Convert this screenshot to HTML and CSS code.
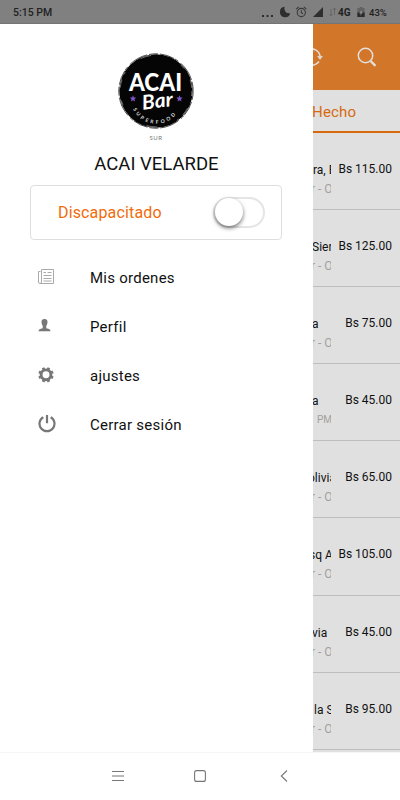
FILE: index.html
```html
<!DOCTYPE html>
<html lang="es">
<head>
    <meta charset="UTF-8">
    <meta name="viewport" content="width=device-width, initial-scale=1.0">
    <title>ACAI VELARDE</title>
    <link rel="stylesheet" href="styles.css">
</head>
<body>
    <div class="phone">
        <header class="status-bar">
            <span class="status-time">5:15 PM</span>
            <svg class="status-icons" width="75" height="24" viewBox="0 0 75 24">
                <g fill="#2e2e2e">
                    <rect x="0" y="15" width="2" height="2"/>
                    <rect x="4.5" y="15" width="2" height="2"/>
                    <rect x="9" y="15" width="2" height="2"/>
                    <path d="M22.6 6.8A5.2 5.2 0 1 0 28.2 13.2A4.8 4.8 0 0 1 22.6 6.8Z"/>
                    <path d="M61 7V17H51Z"/>
                </g>
                <g fill="none" stroke="#393939" stroke-width="1.1">
                    <circle cx="39.3" cy="12.5" r="4.1"/>
                    <path d="M39.3 10.2V12.7L41 13.7M34.2 9.2L36.8 6.9M41.8 6.9L44.4 9.2"/>
                </g>
                <path fill="none" stroke="#616161" stroke-width=".8" d="M69 9V16M67.5 14.2L69 16L70.5 14.2M72.5 15V8M71.3 9.7L72.5 8L73.7 9.7"/>
            </svg>
            <span class="network">4G</span>
            <svg class="battery" width="8" height="10" viewBox="0 0 8 11">
                <path fill="#626262" d="M2.5 0H5.5V1H8V11H0V1H2.5Z"/>
                <path fill="#2c2c2c" d="M0 6H8V11H0Z"/>
                <path fill="#929292" d="M4.7 3L2 7H3.7L3.3 9.5L6 5.7H4.4Z"/>
            </svg>
            <span class="percent">43%</span>
        </header>

        <div class="screen">
            <aside class="drawer">
                <svg class="logo" width="78" height="96" viewBox="0 0 78 96">
                    <circle cx="39" cy="39" r="36.7" fill="#050505"/>
                    <circle cx="39" cy="39" r="37.2" fill="none" stroke="#222" stroke-width=".8" stroke-dasharray="9 2 15 1 4 3 20 2"/>
                    <circle cx="39" cy="39" r="35.9" fill="none" stroke="#bbb" stroke-width=".6" stroke-dasharray="5 13 8 6 2 21 11 32"/>
                    <text class="logo-acai" x="12" y="39" textLength="53" lengthAdjust="spacingAndGlyphs">ACAI</text>
                    <text class="logo-bar" x="25" y="56" textLength="31" lengthAdjust="spacingAndGlyphs" transform="rotate(-7 39 50)">Bar</text>
                    <path id="ring" d="M16 57A25.5 25.5 0 0 0 64 52" fill="none"/>
                    <text class="logo-food"><textPath href="#ring" textLength="51">SUPERFOOD</textPath></text>
                    <path fill="#7d55c7" d="M16 43.2L16.9 45.4L19.2 45.6L17.5 47.2L18 49.5L16 48.3L14 49.5L14.5 47.2L12.8 45.6L15.1 45.4ZM62.5 43.2L63.4 45.4L65.7 45.6L64 47.2L64.5 49.5L62.5 48.3L60.5 49.5L61 47.2L59.3 45.6L61.6 45.4Z"/>
                    <text class="logo-sur" x="32.5" y="87.5" textLength="12.5">SUR</text>
                </svg>
                <h1 class="store-name">ACAI VELARDE</h1>

                <div class="toggle-card">
                    <span class="toggle-label">Discapacitado</span>
                    <span class="switch"><span class="knob"></span></span>
                </div>

                <nav class="menu">
                    <a class="menu-item">
                        <svg width="18" height="20" viewBox="0 0 18 20">
                            <path fill="none" stroke="#aaa" d="M3.5 2.5H15.5V16.5H2Q.5 16.5.5 15V4.5H2.5M3.5 2.5V15Q3.5 16.5 2 16.5M5.5 5.5H8M9.5 5.5H13.5M5.5 8.5H13.5M5.5 11.5H13.5M5.5 14H13.5"/>
                        </svg>
                        <span>Mis ordenes</span>
                    </a>
                    <a class="menu-item">
                        <svg width="18" height="20" viewBox="0 0 18 20">
                            <path fill="#777" d="M6.5 3C8.9 3 9.7 4.5 9.5 6.5Q9.2 8.7 8.3 9.7V12.2Q12.5 12.8 12.5 15.2H.5Q.5 12.8 4.7 12.2V9.7Q3.8 8.7 3.5 6.5C3.3 4.5 4.1 3 6.5 3Z"/>
                        </svg>
                        <span>Perfil</span>
                    </a>
                    <a class="menu-item">
                        <svg width="18" height="20" viewBox="0 0 18 20">
                            <circle cx="8" cy="9.8" r="4.9" fill="none" stroke="#777" stroke-width="2.9"/>
                            <path stroke="#777" stroke-width="2.8" d="M6 4.8L5.1 2.7M10 4.8L10.9 2.7M13 7.8L15.1 6.9M13 11.8L15.1 12.7M10 14.8L10.9 16.9M6 14.8L5.1 16.9M3 11.8L.9 12.7M3 7.8L.9 6.9"/>
                        </svg>
                        <span>ajustes</span>
                    </a>
                    <a class="menu-item">
                        <svg width="18" height="20" viewBox="0 0 18 20">
                            <path fill="none" stroke="#777" stroke-width="2.2" d="M5.3 3.2A7.5 7.5 0 1 0 12.7 3.2M9 1V9.3"/>
                        </svg>
                        <span>Cerrar sesión</span>
                    </a>
                </nav>
            </aside>

            <main class="orders">
                <div class="toolbar">
                    <svg width="87" height="66" viewBox="0 0 87 66">
                        <g fill="none" stroke="#e2dfdc">
                            <path stroke-width="1.5" d="M-5 26A8.3 8.3 0 0 1 7 32M6 37.5A8.3 8.3 0 0 1-5 40"/>
                            <path fill="#e2dfdc" stroke-width=".5" d="M4.5 32.3H9.5L7 35.5Z"/>
                            <circle cx="52.5" cy="31.5" r="7.2" stroke-width="1.5"/>
                            <path stroke-width="2.2" d="M57.7 37.1L62.5 41.9"/>
                        </g>
                    </svg>
                </div>
                <div class="tab">Hecho</div>
                <ul class="order-list">
                    <li class="order">
                        <div class="info"><p class="name">ra, B</p><p class="time cut-r">r - O</p></div>
                        <span class="price">Bs 115.00</span>
                    </li>
                    <li class="order">
                        <div class="info"><p class="name cut-s">Sier</p><p class="time cut-r">r - O</p></div>
                        <span class="price">Bs 125.00</span>
                    </li>
                    <li class="order">
                        <div class="info"><p class="name cut-s">a</p><p class="time cut-r">r - O</p></div>
                        <span class="price">Bs 75.00</span>
                    </li>
                    <li class="order">
                        <div class="info"><p class="name cut-s">a</p><p class="time pm">PM</p></div>
                        <span class="price">Bs 45.00</span>
                    </li>
                    <li class="order">
                        <div class="info"><p class="name cut-o">olivia</p><p class="time cut-r">r - O</p></div>
                        <span class="price">Bs 65.00</span>
                    </li>
                    <li class="order">
                        <div class="info"><p class="name cut-q">sq A</p><p class="time cut-r">r - O</p></div>
                        <span class="price">Bs 105.00</span>
                    </li>
                    <li class="order">
                        <div class="info"><p class="name cut-s">via</p><p class="time cut-r">r - O</p></div>
                        <span class="price">Bs 45.00</span>
                    </li>
                    <li class="order">
                        <div class="info"><p class="name la">la S</p><p class="time cut-r">r - O</p></div>
                        <span class="price">Bs 95.00</span>
                    </li>
                </ul>
            </main>
        </div>

        <footer class="nav-bar">
            <svg width="12" height="12" viewBox="0 0 12 12"><path stroke="#777" d="M0 1.5H12M0 6H12M0 10.5H12"/></svg>
            <svg width="12" height="12" viewBox="0 0 12 12"><rect x=".6" y=".6" width="10.8" height="10.8" rx="2" fill="none" stroke="#777" stroke-width="1.1"/></svg>
            <svg width="12" height="12" viewBox="0 0 12 12"><path fill="none" stroke="#777" stroke-width="1.1" d="M11 .5L5.3 6L11 11.5"/></svg>
        </footer>
    </div>
</body>
</html>
```

FILE: styles.css
```css
:root {
    --orange: #d27629;
    --bright-orange: #ef6c0b;
    --dimmed: #e0e0e0;
}

* {
    box-sizing: border-box;
}

body {
    margin: 0;
    font-family: Roboto, sans-serif;
    color: #111;
    background: #fff;
}

.phone {
    width: 400px;
    height: 800px;
    display: flex;
    flex-direction: column;
    overflow: hidden;
}

.status-bar {
    height: 24px;
    flex: none;
    display: flex;
    align-items: center;
    padding: 1px 12px 0 13px;
    background: #808080;
    border-bottom: 1px solid #747474;
    color: #222;
    font-size: 10.5px;
    font-weight: 500;
}

.status-icons {
    margin-left: auto;
}

.network {
    width: 13px;
    margin-left: 1px;
    font-size: 10px;
    font-weight: 700;
}

.battery {
    margin: 0 4px 0 6px;
}

.percent {
    width: 19px;
    font-size: 9.5px;
}

.screen {
    height: 728px;
    flex: none;
    display: flex;
}

/* Drawer */
.drawer {
    width: 313px;
    flex: none;
    display: flex;
    flex-direction: column;
    background: #fff;
}

.logo {
    margin: 28px 0 0 117px;
}

.logo-acai {
    font: 900 24px Lato, sans-serif;
    fill: #fff;
}

.logo-bar {
    font: italic 700 20px Lato, sans-serif;
    fill: #fff;
}

.logo-food {
    font: 700 5px Lato, sans-serif;
    fill: #ddd;
}

.logo-sur {
    font: 6px Lato, sans-serif;
    fill: #777;
}

.store-name {
    margin: 5px 0 0;
    font-size: 18.5px;
    line-height: 22px;
    font-weight: 400;
    text-align: center;
}

.toggle-card {
    height: 55px;
    margin: 10px 31px 0 30px;
    padding: 0 16px 0 27px;
    display: flex;
    align-items: center;
    justify-content: space-between;
    border: 1px solid #dedede;
    border-radius: 4px;
}

.toggle-label {
    color: var(--bright-orange);
    font-size: 16px;
    letter-spacing: 0.15px;
}

.switch {
    width: 52px;
    height: 31px;
    border: 2px solid #e5e5e5;
    border-radius: 16px;
}

.knob {
    display: block;
    width: 28px;
    height: 28px;
    margin-top: -1px;
    border-radius: 50%;
    background: #fff;
    box-shadow: 0 2px 4px rgba(0, 0, 0, 0.55);
}

.menu {
    margin-top: 13px;
}

.menu-item {
    height: 49px;
    display: flex;
    align-items: center;
    gap: 34px;
    padding-left: 38px;
    font-size: 15px;
    letter-spacing: 0.25px;
}

.menu-item svg {
    flex: none;
    margin-bottom: 2px;
}

/* Orders behind the drawer */
.orders {
    width: 87px;
    background: var(--dimmed);
    overflow: hidden;
}

.toolbar {
    height: 66px;
    background: var(--orange);
}

.tab {
    height: 43px;
    border-bottom: 2px solid #d7690f;
    color: #d7690f;
    font-size: 15px;
    line-height: 44px;
    letter-spacing: 0.2px;
    text-indent: -1px;
}

.order-list {
    margin: 0;
    padding: 0;
    list-style: none;
}

.order {
    height: 77.1px;
    padding: 28px 8px 0 0;
    display: flex;
    justify-content: space-between;
    border-bottom: 1px solid #bebebe;
}

.info {
    width: 18px;
    overflow: hidden;
}

.name,
.time {
    margin: 0;
    font-size: 12px;
    line-height: 18px;
    white-space: nowrap;
}

.time {
    color: #a0a0a0;
    line-height: 20px;
}

.cut-r {
    margin-left: -2px;
}

.cut-s {
    margin-left: -1px;
}

.cut-o {
    margin-left: -5px;
}

.cut-q {
    margin-left: -4px;
}

.la {
    margin-left: 1px;
}

.pm {
    margin-left: 4px;
    font-size: 10px;
}

.price {
    font-size: 12px;
    line-height: 16px;
    white-space: nowrap;
}

.nav-bar {
    height: 48px;
    display: flex;
    align-items: center;
    justify-content: center;
    gap: 70px;
    padding-bottom: 2px;
    border-top: 1px solid #f5f5f5;
}
```
